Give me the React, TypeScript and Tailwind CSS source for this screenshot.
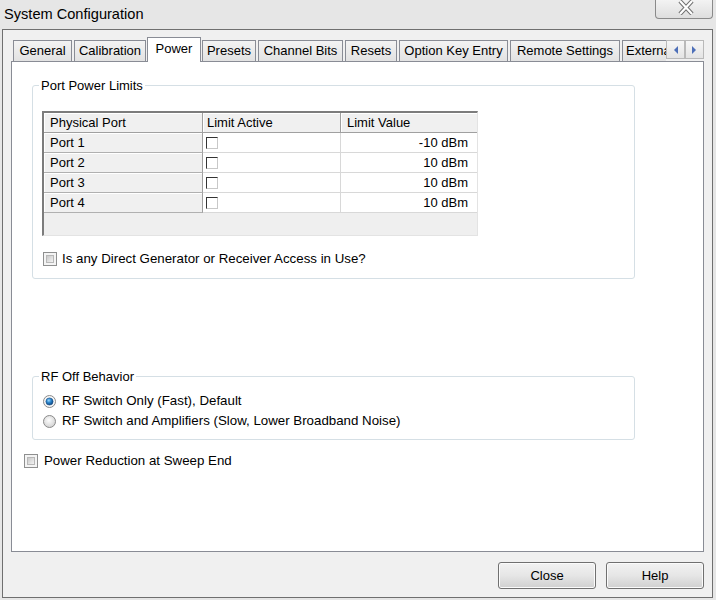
import React from 'react';

const tabs = [
  { label: 'General', cls: 'w-[59px]' },
  { label: 'Calibration', cls: 'ml-[2px] w-[72px]' },
  { label: 'Power', cls: 'ml-[1px] w-[54px]', active: true },
  { label: 'Presets', cls: 'ml-[1px] w-[54px]' },
  { label: 'Channel Bits', cls: 'ml-[2px] w-[85px]' },
  { label: 'Resets', cls: 'ml-[2px] w-[52px]' },
  { label: 'Option Key Entry', cls: 'ml-[2px] w-[109px]' },
  { label: 'Remote Settings', cls: 'ml-[2px] w-[110px]' },
];

const ports = [
  { port: 'Port 1', value: '-10 dBm' },
  { port: 'Port 2', value: '10 dBm' },
  { port: 'Port 3', value: '10 dBm' },
  { port: 'Port 4', value: '10 dBm' },
];

const WinCheck = () => (
  <div className="w-[14px] h-[14px] shrink-0 border border-[#8e8f8f] bg-[#f4f4f4] p-[2px]">
    <div className="w-full h-full border border-[#b8b8b8] bg-linear-to-br from-[#c9c9c9] to-[#f3f3f3]" />
  </div>
);

const CellCheck = () => (
  <div className="w-[12px] h-[12px] border border-t-[#333333] border-l-[#333333] border-r-[#c8c8c8] border-b-[#c8c8c8] bg-white" />
);

const Radio = ({ on }: { on?: boolean }) => (
  <svg width="13" height="13" viewBox="0 0 13 13" className="shrink-0">
    <defs>
      <radialGradient id="rbg" cx="45%" cy="40%" r="65%">
        <stop offset="0" stopColor="#fdfdfd" />
        <stop offset="1" stopColor="#cfcfcf" />
      </radialGradient>
      <radialGradient id="rdot" cx="40%" cy="35%" r="70%">
        <stop offset="0" stopColor="#9ad8ff" />
        <stop offset="0.45" stopColor="#2a85cc" />
        <stop offset="1" stopColor="#0b3f78" />
      </radialGradient>
    </defs>
    <circle cx="6.5" cy="6.5" r="6" fill={on ? '#f6f6f6' : 'url(#rbg)'} stroke="#8a8a8a" />
    {on && <circle cx="6.5" cy="6.5" r="3.6" fill="url(#rdot)" stroke="#1b4f86" strokeWidth="0.6" />}
  </svg>
);

const Arrow = ({ dir }: { dir: 'l' | 'r' }) => (
  <div className="w-[19px] h-[19px] border border-[#b9b9b9] bg-linear-to-b from-[#f6f6f6] to-[#e4e4e4] flex items-center justify-center">
    <svg width="5" height="8" viewBox="0 0 5 8">
      <polygon points={dir === 'l' ? '5,0 5,8 1,4' : '0,0 0,8 4,4'} fill="#4d6fb8" />
    </svg>
  </div>
);

export default function App() {
  return (
    <div className="w-[716px] h-[600px] overflow-hidden bg-[#e6e6e6] flex flex-col font-['Liberation_Sans',Arial,sans-serif] text-[13px] text-black">
      {/* title bar */}
      <div className="h-[29px] shrink-0 flex items-start justify-between">
        <div className="pl-[4px] pt-[5px] text-[14.6px] leading-[18px]">System Configuration</div>
        <div className="mr-[3px] w-[58px] h-[19px] border border-t-0 border-[#8a8a8a] rounded-b-[4px] bg-linear-to-b from-[#f3f3f3] to-[#dedede] flex justify-center">
          <svg width="20" height="15" viewBox="0 0 20 15" className="ml-[3px]">
            <path d="M4 1 L16 14 M16 1 L4 14" stroke="#707070" strokeWidth="4.2" />
            <path d="M4 1 L16 14 M16 1 L4 14" stroke="#ffffff" strokeWidth="2.2" />
          </svg>
        </div>
      </div>

      {/* window frame */}
      <div className="ml-[2px] w-[711px] h-[569px] border border-[#6f6f6f] bg-[#f0f0f0] flex flex-col pl-[8px] pt-[7px]">
        {/* tabs */}
        <div className="h-[24px] flex items-end pl-[2px]">
          {tabs.map((t) =>
            t.active ? (
              <div
                key={t.label}
                className={`${t.cls} relative z-10 h-[25px] -mb-px border border-b-0 border-[#898c95] bg-white flex items-center justify-center pb-[2px] whitespace-nowrap`}
              >
                {t.label}
              </div>
            ) : (
              <div
                key={t.label}
                className={`${t.cls} h-[21px] border border-b-0 border-[#898c95] bg-linear-to-b from-[#f3f3f3] to-[#e2e2e2] flex items-center justify-center whitespace-nowrap`}
              >
                {t.label}
              </div>
            )
          )}
          <div className="ml-[2px] w-[44px] h-[21px] border border-b-0 border-r-0 border-[#898c95] bg-linear-to-b from-[#f3f3f3] to-[#e2e2e2] flex items-center pl-[3px] overflow-hidden whitespace-nowrap">
            External
          </div>
          <div className="self-start mt-[3px] flex">
            <Arrow dir="l" />
            <Arrow dir="r" />
          </div>
        </div>

        {/* tab page */}
        <div className="w-[693px] h-[491px] border border-[#898c95] bg-white flex flex-col">
          <fieldset className="ml-[20px] mt-[16px] w-[603px] border border-[#d5dfe5] rounded-[3px] pb-[12px]">
            <legend className="ml-[6px] px-[2px] leading-[15px]">Port Power Limits</legend>

            <div className="ml-[9px] mt-[18px] w-[436px] h-[125px] border-t-2 border-l-2 border-r border-b border-t-[#7c7c7c] border-l-[#7c7c7c] border-r-[#e3e3e3] border-b-[#e3e3e3] bg-[#efefef] flex flex-col">
              <div className="flex h-[20px] shrink-0">
                <div className="w-[159px] border-r border-b border-[#a0a0a0] bg-[#f0f0f0] shadow-[inset_1px_1px_0_#ffffff] pl-[6px] leading-[19px]">
                  Physical Port
                </div>
                <div className="w-[138px] border-r border-b border-[#a0a0a0] bg-[#f0f0f0] shadow-[inset_1px_1px_0_#ffffff] pl-[4px] leading-[19px]">
                  Limit Active
                </div>
                <div className="w-[136px] border-b border-[#a0a0a0] bg-[#f0f0f0] shadow-[inset_1px_1px_0_#ffffff] pl-[6px] leading-[19px]">
                  Limit Value
                </div>
              </div>
              {ports.map((p) => (
                <div key={p.port} className="flex h-[20px] shrink-0">
                  <div className="w-[159px] border-r border-b border-r-[#a0a0a0] border-b-[#b0b0b0] bg-[#f0f0f0] shadow-[inset_1px_1px_0_#ffffff] pl-[6px] leading-[19px]">
                    {p.port}
                  </div>
                  <div className="w-[138px] border-r border-b border-[#d8d8d8] bg-white pl-[3px] flex items-center">
                    <CellCheck />
                  </div>
                  <div className="w-[136px] border-b border-[#d8d8d8] bg-white pr-[9px] text-right leading-[19px]">
                    {p.value}
                  </div>
                </div>
              ))}
              <div className="flex-1 bg-[#efefef]" />
            </div>

            <div className="ml-[10px] mt-[15px] h-[15px] flex items-center gap-[5px] text-[13.3px]">
              <WinCheck />
              <span className="leading-[15px]">Is any Direct Generator or Receiver Access in Use?</span>
            </div>
          </fieldset>

          <fieldset className="ml-[20px] mt-[90px] w-[603px] border border-[#d5dfe5] rounded-[3px] pb-[8px] text-[13.3px]">
            <legend className="ml-[6px] px-[2px] leading-[15px] text-[13px]">RF Off Behavior</legend>
            <div className="ml-[10px] mt-[7px] h-[20px] flex items-center gap-[6px]">
              <Radio on />
              <span>RF Switch Only (Fast), Default</span>
            </div>
            <div className="ml-[10px] h-[20px] flex items-center gap-[6px]">
              <Radio />
              <span>RF Switch and Amplifiers (Slow, Lower Broadband Noise)</span>
            </div>
          </fieldset>

          <div className="ml-[12px] mt-[13px] h-[15px] flex items-center gap-[6px] text-[13.3px]">
            <WinCheck />
            <span className="leading-[15px]">Power Reduction at Sweep End</span>
          </div>
        </div>

        {/* buttons */}
        <div className="mt-[10px] pr-[8px] flex justify-end gap-[10px]">
          <button className="w-[98px] h-[27px] rounded-[3px] border border-[#707070] bg-linear-to-b from-[#f2f2f2] via-[#e6e6e6] to-[#d0d0d0] shadow-[inset_0_0_0_1px_#fbfbfb]">
            Close
          </button>
          <button className="w-[98px] h-[27px] rounded-[3px] border border-[#707070] bg-linear-to-b from-[#f2f2f2] via-[#e6e6e6] to-[#d0d0d0] shadow-[inset_0_0_0_1px_#fbfbfb]">
            Help
          </button>
        </div>
      </div>
    </div>
  );
}
